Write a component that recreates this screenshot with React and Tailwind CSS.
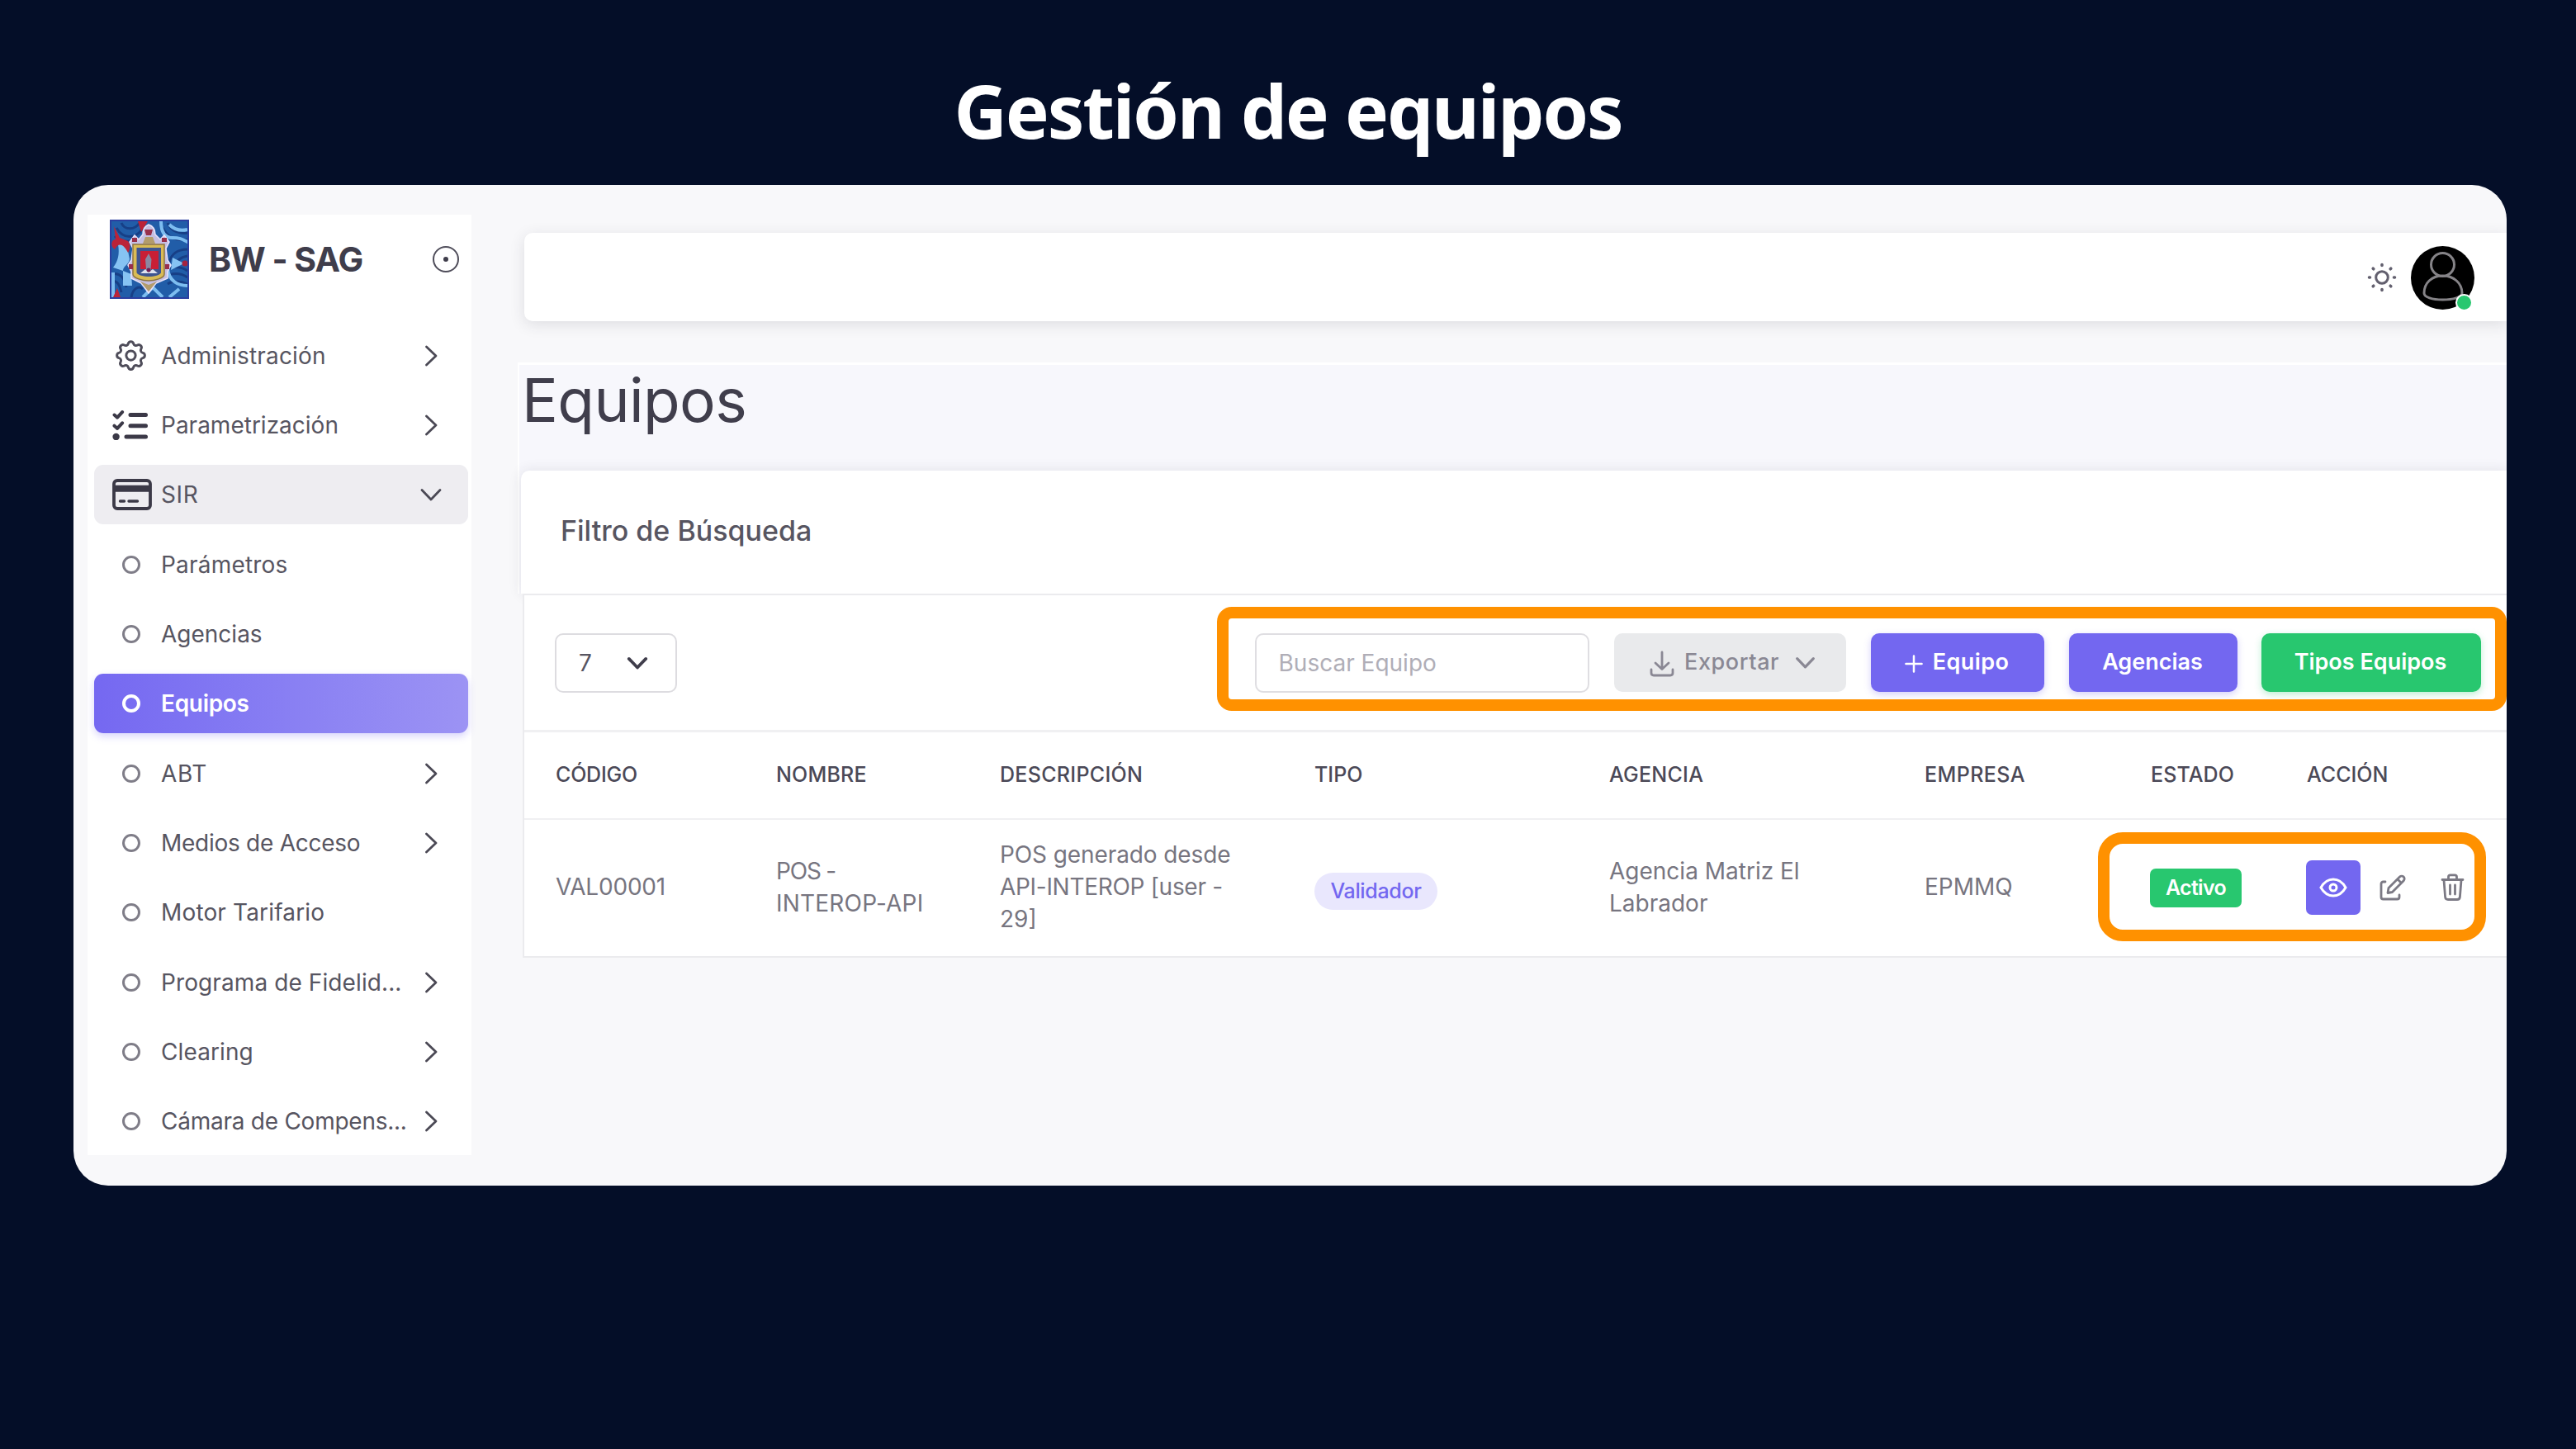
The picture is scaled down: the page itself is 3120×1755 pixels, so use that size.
import { TbSettings } from "react-icons/tb";

function Chevron({ className, open = false, weight = 3 }) {
  return (
    <svg className={className} viewBox="0 0 28 28" fill="none" stroke="currentColor" strokeWidth={weight} strokeLinecap="round" strokeLinejoin="round">
      {open ? <path d="M3 8.5 14 20 25 8.5" /> : <path d="M8.5 3 20 14 8.5 25" />}
    </svg>
  );
}

function CheckList() {
  return (
    <svg className="h-9 w-[44px]" viewBox="0 0 44 36" fill="none" stroke="#3b3947" strokeWidth="5" strokeLinecap="round" strokeLinejoin="round">
      <path d="M22 5.5h18.500M22 18.7h18.500M17 32h23.500" />
      <path d="m2.5 5.5 3.6 3.2 6-6.6M2.5 18.7l3.6 3.2 6-6.6" strokeWidth="4" />
      <circle cx="4.6" cy="32" r="4.200" fill="#3b3947" stroke="none" />
    </svg>
  );
}

function CardIcon() {
  return (
    <svg className="h-[38px] w-12" viewBox="0 0 48 38" fill="none" stroke="#3b3947">
      <rect x="2" y="2" width="44" height="34" rx="4" strokeWidth="3.8" />
      <path d="M2 11.8h44" strokeWidth="8" />
      <path d="M9.500 27h5M20 27h10.500" strokeWidth="3.400" strokeLinecap="round" />
    </svg>
  );
}

function Crest() {
  return (
    <svg className="h-24 w-24" viewBox="0 0 96 96">
      <rect width="96" height="96" fill="#215da8" />
      <g fill="none" stroke="#173f86" strokeWidth="3">
        <path d="M8 10c8 14 24 14 32 0M14 4c4 9 16 9 22 0M6 20c8 8 20 8 28 2" />
        <path d="M70 4c4 10 14 14 26 12M64 10c6 12 18 16 32 14M94 36c-12 0-20 6-22 16M94 44c-10 2-14 6-16 12" />
        <path d="M2 66c10-2 16 4 18 16M2 74c8 0 10 6 12 14M26 94c2-12 10-14 14-10M64 62c8-6 22-6 30 0M66 70c8-6 20-6 28 0M70 78c6-4 16-4 24 0" />
      </g>
      <g fill="none" stroke="#7dbdf0" strokeWidth="4">
        <path d="M62 2c0 12 4 20 14 20s12 2 20 6M72 6c6 6 14 8 22 6M70 60c2 14 12 20 24 20M4 94V64M40 94l12-12 12 12M72 94l12-10" />
      </g>
      <path d="M10 30c8-6 14-2 12 8l2 10c-2 8-8 8-8 14l10 4 1 14H16V62L4 58c6-8 8-16 6-28ZM76 46l14 7-16 8Z" fill="#86c3f3" />
      <path d="M34 2h12l-8 13ZM5 8l7 14 10 4c4 4 2 12 0 14-6-12-12-12-16-4-6-4-4-12 1-12ZM4 94l5-11 4 11Z" fill="#bb2338" />
      <circle cx="91" cy="53" r="3.500" fill="#a3233f" />
      <path d="M47 6c6 2 8 6 8 12l6 6 5-5 6 8-4 8 2 14 4 6-4 8v8L56 77l-9 12-9-12-12-6v-8l-4-8 4-6 2-14-4-8 6-8 5 5 5-6c0-6 2-10 7-12Z" fill="#c5bfe2" stroke="#e9e4fb" strokeWidth="1.500" />
      <path d="M28 30h38v36c0 5-12 8-19 8s-19-3-19-8Z" fill="#d9bb55" stroke="#8d7440" strokeWidth="1.500" />
      <path d="M32.500 34h29.500v30c0 3-9 5-14.500 5S32.500 67 32.500 64Z" fill="#3f5590" />
      <path d="M37 38h22v22H37Z" fill="#c91f35" />
      <path d="m47 41 3.500 7-1 12 6 5H38l6-5-1-12Z" fill="#8a88a2" />
      <path d="m37 65 6-5 4 4 5-4 6 5Z" fill="#dfe2ee" />
      <path d="M42 12h10l-2 7h-6ZM27 22h6v5h-6ZM63 22h6v5h-6ZM23 54h5v6h-5ZM67 54h5v6h-5Z" fill="#98304c" />
      <path d="M43 21h9l3 8H40ZM37 75l10 4 10-4-10 12Z" fill="#b39c6c" />
      <circle cx="47" cy="61" r="2.500" fill="#701f55" />
      <rect x="1" y="1" width="94" height="94" fill="none" stroke="#2b3fa0" strokeWidth="2" />
    </svg>
  );
}

const menu = [
  { label: "Administración", icon: "gear", arrow: true, cls: "tracking-[0.16px]" },
  { label: "Parametrización", icon: "list", arrow: true },
  { label: "SIR", icon: "card", arrow: true, open: true, cls: "tracking-[0.6px]" },
  { label: "Parámetros", cls: "tracking-[0.2px]" },
  { label: "Agencias" },
  { label: "Equipos", active: true, cls: "tracking-[-0.3px]" },
  { label: "ABT", arrow: true, cls: "tracking-[0.6px]" },
  { label: "Medios de Acceso", arrow: true, cls: "tracking-[-0.27px]" },
  { label: "Motor Tarifario", cls: "tracking-[0.15px]" },
  { label: "Programa de Fidelid...", arrow: true, cls: "tracking-[0.1px]" },
  { label: "Clearing", arrow: true, cls: "tracking-[0.1px]" },
  { label: "Cámara de Compens...", arrow: true, cls: "tracking-[-0.25px]" },
];

function MenuIcon({ item }) {
  if (item.icon === "gear") return <TbSettings className="size-[45px] text-[#4f4d5a] [stroke-width:1.6]" />;
  if (item.icon === "list") return <CheckList />;
  if (item.icon === "card") return <CardIcon />;
  return (
    <span
      className={
        item.active
          ? "ml-[12px] size-[22px] rounded-full border-4 border-white"
          : "ml-[12px] size-[22px] rounded-full border-[3.500px] border-[#7f7d88]"
      }
    />
  );
}

function MenuItem({ item }) {
  const tone = item.active
    ? "bg-linear-to-r from-[#7568f1] to-[#9c93f4] font-semibold text-white shadow-[0_4px_10px_rgba(115,103,240,0.28)]"
    : item.open
      ? "bg-[#eeedf1] text-[#575561]"
      : "text-[#575561]";
  return (
    <li className={`flex h-[72px] items-center rounded-[11px] pr-[31px] pl-[22px] ${tone}`}>
      <span className="flex w-[59px] items-center">
        <MenuIcon item={item} />
      </span>
      <span className={`flex-1 text-[28px] leading-none whitespace-nowrap ${item.cls || ""}`}>{item.label}</span>
      {item.arrow && <Chevron open={item.open} className="size-7 text-[#4b4955]" weight={2.8} />}
    </li>
  );
}

function Sidebar() {
  return (
    <aside className="mt-9 ml-[17px] h-[1139px] w-[465px] shrink-0 bg-white pr-1 pl-2">
      <header className="flex h-[108px] items-center pr-[11px] pl-[19px]">
        <Crest />
        <span className="ml-[24px] flex-1 text-[41px] leading-none font-bold tracking-[-1px] text-[#3f3d4b]">BW - SAG</span>
        <span className="flex size-[32px] items-center justify-center rounded-full border-[2.500px] border-[#4f4d5a]">
          <span className="size-[6px] rounded-full bg-[#3f3d4b]" />
        </span>
      </header>
      <ul className="mt-[26.500px] flex flex-col gap-[12.350px]">
        {menu.map((item) => (
          <MenuItem key={item.label} item={item} />
        ))}
      </ul>
    </aside>
  );
}

function TopBar() {
  return (
    <div className="mt-[58px] ml-2 flex h-[107px] items-center justify-end rounded-l-[10px] bg-white pr-[39px] shadow-[0_4px_18px_rgba(47,43,61,0.13)]">
      <svg className="mr-[17px] size-9" viewBox="0 0 36 36" fill="none" stroke="#625f6e" strokeLinecap="round">
        <circle cx="18" cy="18" r="7.300" strokeWidth="3" />
        <path strokeWidth="3.600" d="M18 2.500v1M18 32.500v1M2.500 18h1M32.500 18h1M7.200 7.200l.6.6M28.200 28.200l.6.6M7.200 28.800l.6-.6M28.200 7.800l.6-.6" />
      </svg>
      <span className="relative mt-[2px] size-[77px]">
        <svg className="size-[77px]" viewBox="0 0 77 77" fill="none" stroke="#858387" strokeWidth="3">
          <circle cx="38.500" cy="38.500" r="38.500" fill="#000" stroke="none" />
          <circle cx="38.500" cy="22.500" r="14" />
          <path d="M16 57c0-12 9-21 22.500-21S62 45 62 57c0 5-11 8-23.500 8S16 62 16 57Z" />
        </svg>
        <span className="absolute right-[2px] bottom-[-2px] size-[21px] rounded-full border-[2.500px] border-white bg-[#28c76f]" />
      </span>
    </div>
  );
}

const columns = [
  ["CÓDIGO", "tracking-[-0.2px]"],
  ["NOMBRE", "tracking-[0.2px]"],
  ["DESCRIPCIÓN", "tracking-[0.3px]"],
  ["TIPO", ""],
  ["AGENCIA", "tracking-[0.25px]"],
  ["EMPRESA", "tracking-[0.4px]"],
  ["ESTADO", "tracking-[0.1px]"],
  ["ACCIÓN", ""],
];

const button = "flex h-[71px] items-center justify-center rounded-[10px] pr-[2px] pb-[2px] text-[27px] leading-none font-semibold text-white";

function Toolbar() {
  return (
    <div className="flex h-[163px] items-center pr-[31px] pl-[37px]">
      <div className="flex h-[72px] w-[148px] items-center justify-between rounded-[10px] border-2 border-[#dddce0] pr-[33px] pl-[27px] text-[28px] text-[#575561]">
        7
        <Chevron open className="size-[26px] text-[#3f3d4b]" weight={4} />
      </div>
      <div className="ml-auto flex items-center">
        <div className="flex h-[72px] w-[405px] items-center rounded-[10px] border-2 border-[#dfdee2] pl-[26.500px] text-[28px] text-[#b0aeb7]">Buscar Equipo</div>
        <div className="ml-[30px] flex h-[71px] w-[281px] items-center rounded-[10px] bg-[#e9eaec] pl-[43px] text-[27px] leading-none font-medium tracking-[0.6px] text-[#8a8894]">
          <svg className="mt-[2px] h-8 w-[30px]" viewBox="0 0 30 32" fill="none" stroke="currentColor" strokeWidth="2.800" strokeLinecap="round" strokeLinejoin="round">
            <path d="M15 2v20M7 15l8 7.500 8-7.500M2 23v4c0 2 1 3 3 3h20c2 0 3-1 3-3v-4" />
          </svg>
          <span className="mb-[2px] ml-[12px]">Exportar</span>
          <Chevron open className="ml-[19px] size-[25px]" weight={3.6} />
        </div>
        <div className={`${button} ml-[30px] w-[210px] bg-[#7367f0] tracking-[0.4px] shadow-[0_3px_8px_rgba(115,103,240,0.3)]`}>
          <svg className="mt-[4px] mr-[12px] size-[22px]" viewBox="0 0 23 23" stroke="currentColor" strokeWidth="2.600" strokeLinecap="round">
            <path d="M11.500 1.500v20M1.500 11.500h20" />
          </svg>
          Equipo
        </div>
        <div className={`${button} ml-[30px] w-[204px] bg-[#7367f0] shadow-[0_3px_8px_rgba(115,103,240,0.3)]`}>Agencias</div>
        <div className={`${button} ml-[29px] w-[266px] bg-[#28c76f] shadow-[0_3px_8px_rgba(40,199,111,0.3)]`}>Tipos Equipos</div>
      </div>
    </div>
  );
}

function Actions() {
  return (
    <div className="flex items-center text-[#7b7984]">
      <span className="-ml-[1px] flex size-[66px] items-center justify-center rounded-[7px] bg-[#7367f0] text-white">
        <svg className="h-6 w-[34px]" viewBox="0 0 34 24" fill="none" stroke="currentColor" strokeWidth="3">
          <path d="M2 12C6 5 11 2 17 2s11 3 15 10c-4 7-9 10-15 10S6 19 2 12Z" />
          <circle cx="17" cy="12" r="4" />
        </svg>
      </span>
      <svg className="ml-[23px] h-8 w-[32px]" viewBox="0 0 32 32" fill="none" stroke="currentColor" strokeWidth="2.800" strokeLinecap="round" strokeLinejoin="round">
        <path d="M7 9H4.500C3 9 2 10 2 11.500v16C2 29 3 30 4.500 30h17c1.500 0 2.500-1 2.500-2.500V25" />
        <path d="M11 16.500 24.500 3a3.300 3.300 0 0 1 4.700 4.700L15.500 21.500 10 22.500ZM22 6l4.500 4.500" />
      </svg>
      <svg className="ml-[42px] h-[33px] w-[29px]" viewBox="0 0 29 33" fill="none" stroke="currentColor" strokeWidth="2.800" strokeLinecap="round" strokeLinejoin="round">
        <path d="M2 7.500h25M4 8l1.600 20.500C5.800 30.500 7 31.500 9 31.500h11c2 0 3.200-1 3.400-3L25 8M9.500 7V4c0-1.300.8-2.200 2.200-2.200h5.600c1.400 0 2.200.9 2.200 2.200v3M11.500 14v11M17.500 14v11" />
      </svg>
    </div>
  );
}

const grid = "grid grid-cols-[267px_271px_381px_357px_382px_274px_189px_1fr] items-center pl-[38px]";

function Table() {
  return (
    <>
      <div className={`${grid} h-[109px] border-t-[3px] border-b-2 border-[#f0f0f2] pb-[2px] text-[25px] leading-none font-medium text-[#4b4957]`}>
        {columns.map(([name, cls]) => (
          <span key={name} className={cls}>{name}</span>
        ))}
      </div>
      <div className={`${grid} h-[165px] pb-[2px] text-[28px] leading-[39px] whitespace-nowrap text-[#777580]`}>
        <span className="tracking-[-0.2px]">VAL00001</span>
        <span>
          <span className="tracking-[-1.200px]">POS -</span>
          <br />
          <span className="tracking-[0.200px]">INTEROP-API</span>
        </span>
        <span>
          <span className="tracking-[-0.100px]">POS generado desde</span>
          <br />
          <span className="tracking-[-0.300px]">API-INTEROP [user -</span>
          <br />
          29]
        </span>
        <span className="mt-[9px] flex h-[45px] w-[149px] items-center justify-center rounded-full bg-[#e9e7fd] text-[25px] leading-none font-medium tracking-[-0.350px] text-[#7367f0]">
          Validador
        </span>
        <span>
          Agencia Matriz El
          <br />
          Labrador
        </span>
        <span>EPMMQ</span>
        <span className="-ml-[1px] mt-[2px] flex h-[47px] w-[111px] items-center justify-center rounded-[7px] bg-[#28c76f] text-[25px] leading-none font-semibold tracking-[-0.700px] text-white">
          Activo
        </span>
        <Actions />
      </div>
    </>
  );
}

export default function App() {
  return (
    <div className="flex h-[1755px] w-[3120px] flex-col overflow-hidden bg-[#040e28] font-['Inter',sans-serif]">
      <h1 className="h-[224px] text-center font-['Noto_Sans',sans-serif] text-[89px] leading-[268px] font-bold tracking-[-2.100px] whitespace-nowrap text-white">
        Gestión de equipos
      </h1>
      <div className="relative ml-[89px] flex h-[1212px] w-[2947px] overflow-hidden rounded-[42px] bg-[#f8f8fa]">
        <Sidebar />
        <main className="ml-[56px] flex flex-1 flex-col">
          <TopBar />
          <section className="mt-[50px] flex h-[280px] flex-col border-t-[3px] border-l-2 border-white bg-[#f7f7fc]">
            <h2 className="h-[128px] pl-[3px] text-[73px] leading-[86px] tracking-[-0.600px] text-[#403e4c]">Equipos</h2>
            <div className="ml-[2px] flex flex-1 items-center rounded-tl-[10px] bg-white pb-[4px] pl-[48px] text-[34px] font-medium text-[#575561] shadow-[0_0_16px_rgba(47,43,61,0.11)]">
              Filtro de Búsqueda
            </div>
          </section>
          <div className="ml-[6px] border-y-2 border-l-2 border-[#ebebee] bg-white">
            <Toolbar />
            <Table />
          </div>
        </main>
        <div className="absolute top-[511px] left-[1385px] h-[126px] w-[1562px] rounded-[18px] border-[14px] border-[#ff9100]" />
        <div className="absolute top-[784px] left-[2452px] h-[132px] w-[470px] rounded-[30px] border-[14px] border-[#ff9100]" />
      </div>
    </div>
  );
}
